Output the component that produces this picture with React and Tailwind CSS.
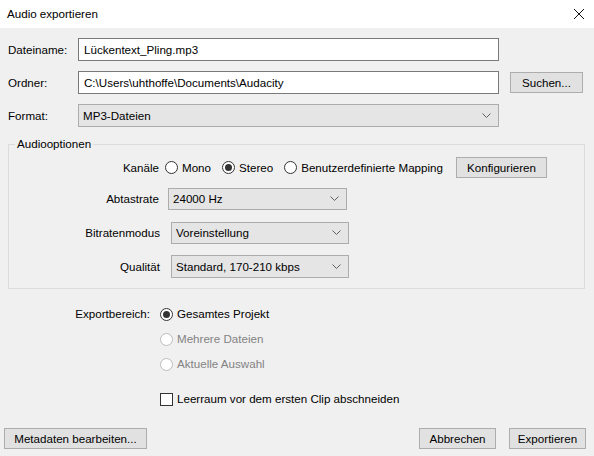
import React from "react";

function Radio({ checked, disabled, label }) {
  return (
    <span className="flex items-center">
      <span
        className={
          "w-[13px] h-[13px] rounded-full border bg-white flex items-center justify-center " +
          (disabled ? "border-[#bcbcbc] bg-[#f0f0f0]" : "border-[#333333]")
        }
      >
        {checked && <span className="w-[7px] h-[7px] rounded-full bg-[#333333]" />}
      </span>
      <span className={"ml-[4px] " + (disabled ? "text-[#838383]" : "")}>{label}</span>
    </span>
  );
}

function Chevron() {
  return (
    <svg width="9" height="6" viewBox="0 0 9 6" className="shrink-0">
      <polyline points="0.5,0.5 4.5,4.5 8.5,0.5" fill="none" stroke="#606060" strokeWidth="1" />
    </svg>
  );
}

function Select({ value, className }) {
  return (
    <div
      className={
        "flex items-center justify-between bg-[#e5e5e5] border border-[#acacac] pl-[4px] pr-[7px] " +
        className
      }
    >
      <span>{value}</span>
      <Chevron />
    </div>
  );
}

function Button({ children, className }) {
  return (
    <div
      className={
        "flex items-center justify-center bg-[#e1e1e1] border border-[#adadad] h-[21px] " + className
      }
    >
      {children}
    </div>
  );
}

export default function App() {
  return (
    <div className="w-[594px] h-[456px] bg-[#f0f0f0] flex flex-col font-['Liberation_Sans',Arial,sans-serif] text-[11.6px] leading-[14px] text-black overflow-hidden">
      {/* Titelleiste */}
      <div className="h-[28px] bg-white flex items-center justify-between pl-[7px] pr-[10px] shrink-0">
        <span>Audio exportieren</span>
        <svg width="10" height="10" viewBox="0 0 10 10">
          <line x1="0" y1="0" x2="10" y2="10" stroke="#111" strokeWidth="1" />
          <line x1="10" y1="0" x2="0" y2="10" stroke="#111" strokeWidth="1" />
        </svg>
      </div>

      <div className="flex flex-col flex-1 px-[8px] pt-[10px]">
        <div className="flex items-center">
          <span className="w-[70px]">Dateiname:</span>
          <div className="w-[421px] h-[23px] bg-white border border-[#7a7a7a] flex items-center pl-[5px]">
            Lückentext_Pling.mp3
          </div>
        </div>

        <div className="flex items-center mt-[10px]">
          <span className="w-[70px]">Ordner:</span>
          <div className="w-[421px] h-[23px] bg-white border border-[#7a7a7a] flex items-center pl-[5px]">
            C:\Users\uhthoffe\Documents\Audacity
          </div>
          <Button className="ml-[11px] w-[73px]">Suchen...</Button>
        </div>

        <div className="flex items-center mt-[10px]">
          <span className="w-[70px]">Format:</span>
          <Select value="MP3-Dateien" className="w-[421px] h-[23px]" />
        </div>

        <fieldset className="mt-[10px] w-[577px] border border-[#dcdcdc] pb-[10px]">
          <legend className="ml-[6px] px-[2px]">Audiooptionen</legend>

          <div className="flex items-center mt-[6px] h-[21px]">
            <span className="w-[150px] text-right">Kanäle</span>
            <div className="ml-[6px] flex items-center gap-[11px]">
              <Radio label="Mono" />
              <Radio label="Stereo" checked />
              <Radio label="Benutzerdefinierte Mapping" />
            </div>
            <Button className="ml-[13px] w-[91px] h-[21px]">Konfigurieren</Button>
          </div>

          <div className="flex items-center mt-[10px]">
            <span className="w-[150px] text-right">Abtastrate</span>
            <Select value="24000 Hz" className="ml-[9px] w-[179px] h-[22px]" />
          </div>

          <div className="flex items-center mt-[12px]">
            <span className="w-[151px] text-right">Bitratenmodus</span>
            <Select value="Voreinstellung" className="ml-[11px] w-[178px] h-[22px]" />
          </div>

          <div className="flex items-center mt-[11px]">
            <span className="w-[151px] text-right">Qualität</span>
            <Select value="Standard, 170-210 kbps" className="ml-[11px] w-[178px] h-[23px]" />
          </div>
        </fieldset>

        {/* Exportbereich */}
        <div className="flex mt-[18px]">
          <span className="w-[142px] text-right">Exportbereich:</span>
          <div className="ml-[10px] flex flex-col gap-[11px]">
            <Radio label="Gesamtes Projekt" checked />
            <Radio label="Mehrere Dateien" disabled />
            <Radio label="Aktuelle Auswahl" disabled />
            <span className="flex items-center mt-[10px]">
              <span className="w-[13px] h-[13px] border border-[#333333] bg-white" />
              <span className="ml-[4px]">Leerraum vor dem ersten Clip abschneiden</span>
            </span>
          </div>
        </div>

        <div className="mt-auto mb-[7px] -ml-[4px] flex items-center">
          <Button className="w-[143px]">Metadaten bearbeiten...</Button>
          <div className="ml-auto flex gap-[13px]">
            <Button className="w-[77px]">Abbrechen</Button>
            <Button className="w-[77px]">Exportieren</Button>
          </div>
        </div>
      </div>
    </div>
  );
}
